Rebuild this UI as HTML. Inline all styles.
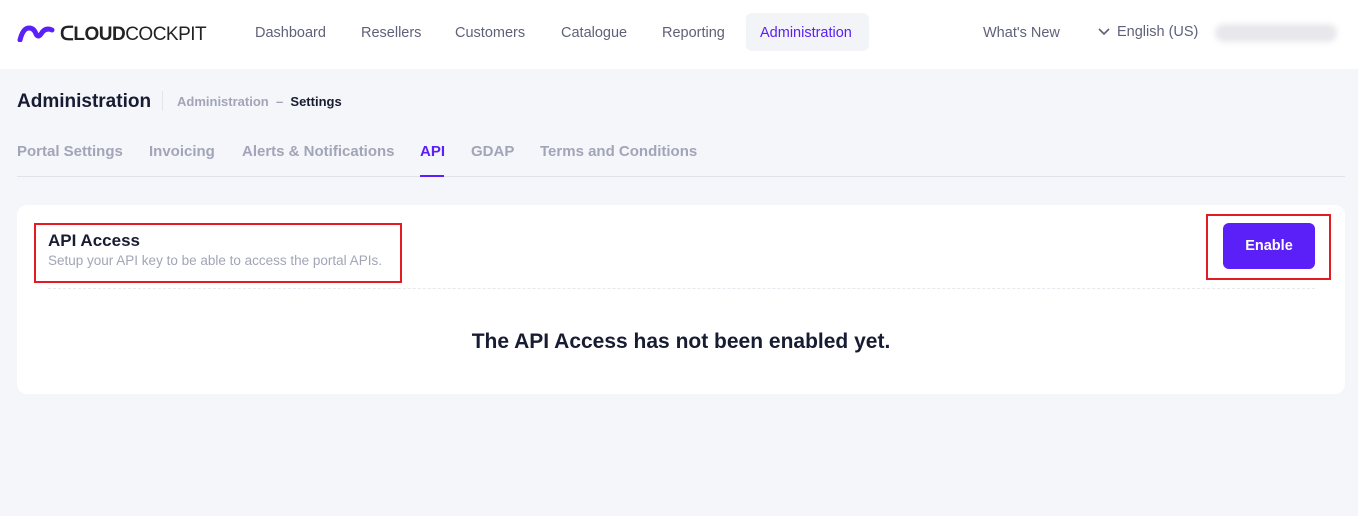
<!DOCTYPE html>
<html><head><style>
*{margin:0;padding:0;box-sizing:border-box}
body{width:1358px;height:516px;background:#f4f6fa;font-family:"Liberation Sans",sans-serif;position:relative;overflow:hidden}
.hdr{position:absolute;left:0;top:0;width:1358px;height:69px;background:#fff}
.a{position:absolute;white-space:nowrap}
.nav{font-size:14.5px;color:#5e6278;top:25px}
.tab{top:143px;font-size:15px;color:#a1a5b7;font-weight:bold}
</style></head><body>
<div class="hdr">
<svg class="a" style="left:17px;top:22px" width="40" height="20" viewBox="0 0 40 20"><path d="M3 18 Q6 6 12 6 Q17 6 19 12 Q21 16 24 12 Q28 5 35 8" fill="none" stroke="#5b1ff7" stroke-width="5" stroke-linecap="round"/></svg>
<div class="a" style="left:60px;top:23px;font-size:19px;font-weight:bold;color:#222;letter-spacing:-0.5px">ᑕLOUD<span style="font-weight:normal">COCKPIT</span></div>
<div class="a nav" style="left:255px">Dashboard</div>
<div class="a nav" style="left:361px">Resellers</div>
<div class="a nav" style="left:455px">Customers</div>
<div class="a nav" style="left:561px">Catalogue</div>
<div class="a nav" style="left:662px">Reporting</div>
<div class="a" style="left:746px;top:13px;width:123px;height:38px;background:#f3f4f7;border-radius:6px"></div>
<div class="a nav" style="left:760px;color:#5b1ff7">Administration</div>
<div class="a nav" style="left:983px">What's New</div>
<svg class="a" style="left:1098px;top:28px" width="12" height="8"><path d="M1 1l5 5 5-5" fill="none" stroke="#5e6278" stroke-width="1.6"/></svg>
<div class="a nav" style="left:1117px;top:24px">English (US)</div>
<div class="a" style="left:1215px;top:24px;width:122px;height:18px;background:#e8e8ec;border-radius:9px;filter:blur(3px)"></div>
</div>
<div class="a" style="left:17px;top:91px;font-size:19px;color:#181c32;font-weight:bold">Administration</div>
<div class="a" style="left:162px;top:91px;width:1px;height:20px;background:#e2e4ea"></div>
<div class="a" style="left:177px;top:94px;font-size:13px;color:#a1a5b7;font-weight:bold">Administration &nbsp;–&nbsp; <span style="color:#181c32">Settings</span></div>
<div class="a tab" style="left:17px">Portal Settings</div>
<div class="a tab" style="left:149px">Invoicing</div>
<div class="a tab" style="left:242px">Alerts &amp; Notifications</div>
<div class="a tab" style="left:420px;color:#5b1ff7">API</div>
<div class="a tab" style="left:471px">GDAP</div>
<div class="a tab" style="left:540px">Terms and Conditions</div>
<div class="a" style="left:17px;top:176px;width:1328px;height:1px;background:#e1e3ea"></div>
<div class="a" style="left:420px;top:175px;width:24px;height:2px;background:#5b1ff7"></div>
<div class="a" style="left:17px;top:205px;width:1328px;height:189px;background:#fff;border-radius:10px"></div>
<div class="a" style="left:34px;top:223px;width:368px;height:60px;border:2px solid #e31b23"></div>
<div class="a" style="left:48px;top:231px;font-size:17px;color:#181c32;font-weight:bold">API Access</div>
<div class="a" style="left:48px;top:253px;font-size:13.5px;color:#a1a5b7">Setup your API key to be able to access the portal APIs.</div>
<div class="a" style="left:1206px;top:214px;width:125px;height:66px;border:2px solid #e31b23"></div>
<div class="a" style="left:1223px;top:223px;width:92px;height:46px;background:#5b1ff7;border-radius:6px;color:#fff;font-size:14.5px;font-weight:bold;text-align:center;line-height:47px">Enable</div>
<div class="a" style="left:48px;top:288px;width:1267px;border-top:1px dashed #e6e8ee"></div>
<div class="a" style="left:0;width:1362px;top:330px;text-align:center;font-size:21px;font-weight:bold;color:#181c32">The API Access has not been enabled yet.</div>
</body></html>
